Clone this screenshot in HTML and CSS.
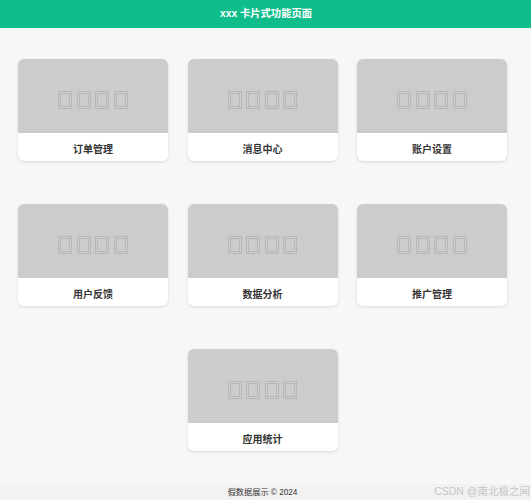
FILE: index.html
```html
<!DOCTYPE html>
<html lang="zh-CN">
<head>
<meta charset="utf-8">
<title>xxx 卡片式功能页面</title>
<link rel="stylesheet" href="styles.css">
</head>
<body>
<header class="topbar">xxx 卡片式功能页面</header>
<main class="grid">
  <div class="card"><div class="thumb"><span class="tofu"></span><span class="tofu"></span><span class="tofu"></span><span class="tofu"></span></div><div class="label">订单管理</div></div>
  <div class="card"><div class="thumb"><span class="tofu"></span><span class="tofu"></span><span class="tofu"></span><span class="tofu"></span></div><div class="label">消息中心</div></div>
  <div class="card"><div class="thumb"><span class="tofu"></span><span class="tofu"></span><span class="tofu"></span><span class="tofu"></span></div><div class="label">账户设置</div></div>
  <div class="card"><div class="thumb"><span class="tofu"></span><span class="tofu"></span><span class="tofu"></span><span class="tofu"></span></div><div class="label">用户反馈</div></div>
  <div class="card"><div class="thumb"><span class="tofu"></span><span class="tofu"></span><span class="tofu"></span><span class="tofu"></span></div><div class="label">数据分析</div></div>
  <div class="card"><div class="thumb"><span class="tofu"></span><span class="tofu"></span><span class="tofu"></span><span class="tofu"></span></div><div class="label">推广管理</div></div>
  <div class="card center"><div class="thumb"><span class="tofu"></span><span class="tofu"></span><span class="tofu"></span><span class="tofu"></span></div><div class="label">应用统计</div></div>
</main>
<footer class="footer">假数据展示 © 2024</footer>
<div class="watermark">CSDN @南北极之间</div>
</body>
</html>
```
FILE: styles.css
```css
html, body {
  margin: 0;
  padding: 0;
}
body {
  background: #f6f7f9;
  font-family: "Liberation Sans", "Noto Sans CJK SC", sans-serif;
  color: #333;
  position: relative;
  min-height: 500px;
}
.topbar {
  height: 28px;
  line-height: 28px;
  background: #0fbd8b;
  color: #fff;
  font-size: 10.3px;
  font-weight: bold;
  text-align: center;
  padding-left: 1px;
}
.grid {
  display: grid;
  grid-template-columns: repeat(3, 150px);
  column-gap: 19.5px;
  row-gap: 43px;
  justify-content: center;
  padding: 31px 6px 0 0;
}
.card {
  background: #fff;
  border-radius: 6px;
  overflow: hidden;
  box-shadow: 0 1px 3px rgba(0, 0, 0, 0.12);
  height: 102px;
  display: flex;
  flex-direction: column;
}
.card.center {
  grid-column: 2;
}
.thumb {
  height: 74px;
  background: #cccccc;
  display: flex;
  align-items: center;
  justify-content: center;
  gap: 4.5px;
  padding-top: 7px;
  box-sizing: border-box;
}
.tofu {
  width: 14px;
  height: 18px;
  box-sizing: border-box;
  border: 3px double #b7b7b7;
}
.label {
  flex: 1;
  display: flex;
  align-items: center;
  justify-content: center;
  padding-top: 2px;
  font-size: 10px;
  font-weight: bold;
  color: #333;
}
.footer {
  margin-top: 33px;
  background: #f2f2f2;
  font-size: 8.2px;
  line-height: 14px;
  padding: 2px 6px 12px 0;
  text-align: center;
  color: #333;
}
.watermark {
  position: absolute;
  right: 1px;
  top: 484px;
  font-size: 10.5px;
  line-height: 14px;
  color: #c4c4c4;
}
```
